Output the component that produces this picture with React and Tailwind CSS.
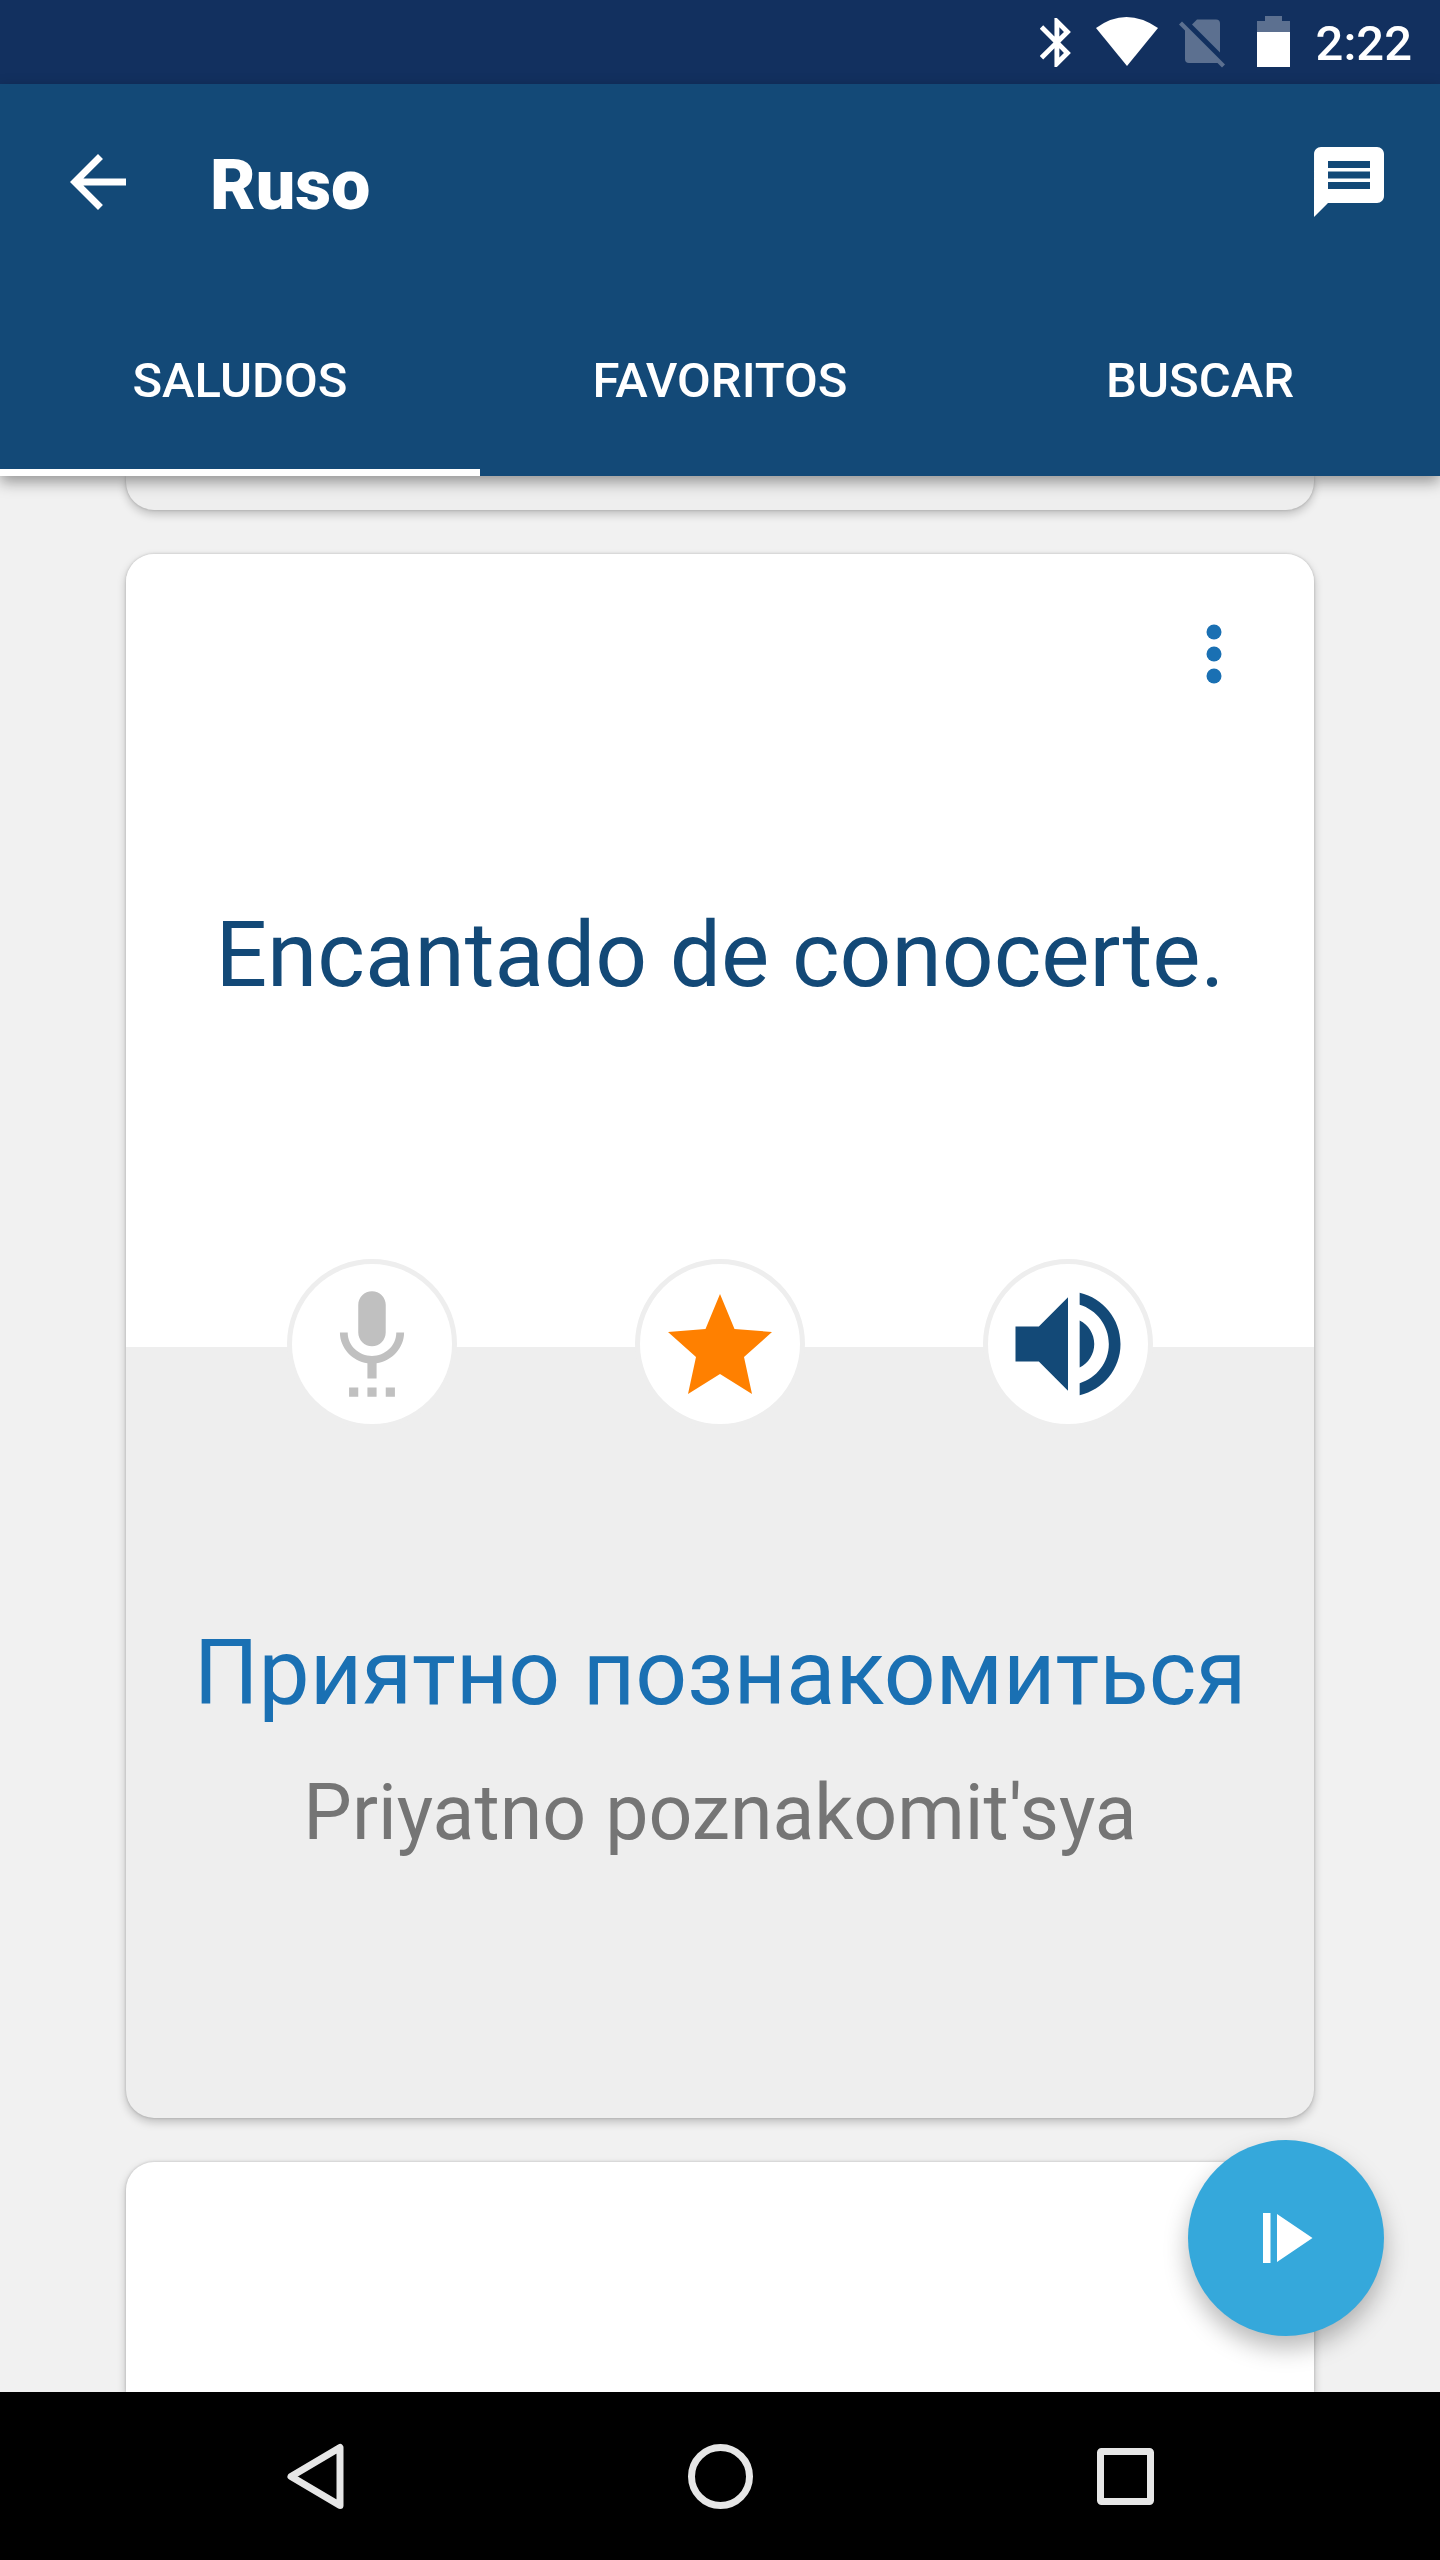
import React from "react";

const tabs = ["SALUDOS", "FAVORITOS", "BUSCAR"];

const cardShadow = "shadow-[0_4px_10px_rgba(0,0,0,0.22),0_0_3px_rgba(0,0,0,0.18)]";

const StatusBar = () => (
  <div className="flex h-[84px] shrink-0 items-center bg-[#12305f] pr-7 text-white">
    <svg className="ml-auto h-[84px] w-[270px]" viewBox="0 0 270 84" aria-hidden="true">
      {/* Bluetooth */}
      <path
        d="M17.710 7.710L12 2h-1v7.590L6.410 5 5 6.410 10.590 12 5 17.590 6.410 19 11 14.410V22h1l5.710-5.710-4.300-4.290 4.300-4.290zM13 5.830l1.880 1.880L13 9.590V5.830zm1.880 10.460L13 18.170v-3.760l1.880 1.880z"
        transform="translate(-12.5 13) scale(2.45)"
        fill="#fff"
      />
      {/* Wifi */}
      <path d="M56 28Q86 6 118 28L87 66Z" fill="#fff" />
      {/* No SIM */}
      <g fill="#5c7090">
        <path d="M152 24.5 157 19.5H176a4 4 0 0 1 4 4V52.500Z" />
        <path d="M145 28.500 179.500 63H149a4 4 0 0 1-4-4Z" />
        <path d="M139 24.500 142 21.500 185 64.500 182 67.500Z" />
      </g>
      {/* Battery */}
      <path d="M225 16h17v5h8v12h-33V21h8Z" fill="#5c7090" />
      <path d="M217 32h33v35h-33Z" fill="#fff" />
    </svg>
    <span className="ml-1.5 pt-1 text-[49px] leading-[56px] font-medium">2:22</span>
  </div>
);

const AppBar = () => (
  <header className="relative z-10 shrink-0 bg-[#134977] text-white shadow-[0_6px_14px_rgba(0,0,0,0.38)]">
    <div className="flex h-[196px] items-center pr-[49px] pl-14">
      <button aria-label="Atrás" className="h-[84px] w-[84px]">
        <svg className="h-[84px] w-[84px]" viewBox="0 0 24 24" fill="currentColor">
          <path d="M20 11H7.830l5.590-5.590L12 4l-8 8 8 8 1.410-1.410L7.830 13H20v-2z" />
        </svg>
      </button>
      <h1 className="ml-[70px] pt-1.5 text-[70px] leading-[84px] font-black">Ruso</h1>
      <button aria-label="Comentarios" className="ml-auto h-[84px] w-[84px]">
        <svg className="h-[84px] w-[84px]" viewBox="0 0 24 24" fill="currentColor">
          <path d="M20 2H4c-1.100 0-1.990.9-1.990 2L2 22l4-4h14c1.100 0 2-.9 2-2V4c0-1.100-.9-2-2-2zM6 9h12v2H6V9zm12 5H6v-2h12v2zm0-6H6V6h12v2z" />
        </svg>
      </button>
    </div>
    <nav className="grid h-[196px] grid-cols-3">
      {tabs.map((tab, index) => (
        <button
          key={tab}
          className={`border-b-[7px] pt-3 text-[49px] leading-[56px] font-medium ${
            index === 0 ? "border-white" : "border-transparent"
          }`}
        >
          {tab}
        </button>
      ))}
    </nav>
  </header>
);

const RoundButton = ({ label, children }) => (
  <button
    aria-label={label}
    className="flex h-[170px] w-[170px] items-center justify-center rounded-full border-[5px] border-[#eeeeee] bg-white"
  >
    {children}
  </button>
);

const PhraseCard = () => (
  <article className={`shrink-0 overflow-hidden rounded-[28px] bg-[#eeeeee] ${cardShadow}`}>
    <div className="flex h-[793px] flex-col bg-white">
      <div className="flex justify-end px-[72px] pt-[58px]">
        <button aria-label="Más opciones" className="h-[84px] w-14">
          <svg className="h-[84px] w-14" viewBox="0 0 56 84" fill="#1a70b3">
            <circle cx="28" cy="20" r="7.500" />
            <circle cx="28" cy="42" r="7.500" />
            <circle cx="28" cy="64" r="7.500" />
          </svg>
        </button>
      </div>
      <p className="mt-[203px] text-center text-[91px] leading-[112px] text-[#134977]">
        Encantado de conocerte.
      </p>
    </div>

    <div className="relative -mt-[88px] flex justify-center gap-[178px]">
      <RoundButton label="Grabar">
        <svg className="h-[110px] w-[110px]" viewBox="0 0.5 24 24" fill="#c0c0c0">
          <path d="M12 13c1.660 0 2.990-1.340 2.990-3L15 4c0-1.660-1.340-3-3-3S9 2.340 9 4v6c0 1.660 1.340 3 3 3zm-1 11h2v-2h-2v2zm-4 0h2v-2H7v2zm8 0h2v-2h-2v2zm4-14h-1.700c0 3-2.540 5.100-5.300 5.100S6.700 13 6.700 10H5c0 3.410 2.720 6.230 6 6.720V20h2v-3.280c3.280-.49 6-3.310 6-6.720z" />
        </svg>
      </RoundButton>
      <RoundButton label="Favorito">
        <svg className="h-[110px] w-[110px]" viewBox="0 0 110 110" fill="#ff8000">
          <path d="M55 5 69.500 40 107 43 79 68 87 105 55 85 23 105 31 68 3 43 40.500 40Z" />
        </svg>
      </RoundButton>
      <RoundButton label="Escuchar">
        <svg className="h-[140px] w-[140px]" viewBox="0 0 24 24" fill="#134977">
          <path d="M3 9v6h4l5 5V4L7 9H3zm13.500 3c0-1.770-1.020-3.290-2.500-4.030v8.050c1.480-.73 2.500-2.250 2.500-4.020zM14 3.230v2.060c2.890.86 5 3.540 5 6.710s-2.110 5.850-5 6.710v2.060c4.010-.91 7-4.490 7-8.770s-2.990-7.860-7-8.770z" />
        </svg>
      </RoundButton>
    </div>

    <div className="flex h-[689px] flex-col items-center pt-[188px]">
      <p className="text-[91px] leading-[112px] text-[#1a70b3]">Приятно познакомиться</p>
      <p className="mt-7 text-[77px] leading-[112px] text-[#757575]">Priyatno poznakomit'sya</p>
    </div>
  </article>
);

const NavBar = () => (
  <footer className="flex h-[168px] shrink-0 items-center justify-center gap-[296px] bg-black">
    <button aria-label="Atrás" className="h-[108px] w-[108px]">
      <svg viewBox="0 0 108 108" fill="none" stroke="#e6e6e6" strokeWidth="7" strokeLinejoin="round">
        <path d="M78 25.500V83.500L29 54.500Z" />
      </svg>
    </button>
    <button aria-label="Inicio" className="h-[108px] w-[108px]">
      <svg viewBox="0 0 108 108" fill="none" stroke="#e6e6e6" strokeWidth="7">
        <circle cx="54.500" cy="54.500" r="29" />
      </svg>
    </button>
    <button aria-label="Recientes" className="h-[108px] w-[108px]">
      <svg viewBox="0 0 108 108" fill="none" stroke="#e6e6e6" strokeWidth="7" strokeLinejoin="round">
        <rect x="30.500" y="29.500" width="50" height="50" rx="1" />
      </svg>
    </button>
  </footer>
);

const App = () => (
  <div className="flex h-screen flex-col bg-[#f1f1f1] font-['Roboto',sans-serif]">
    <StatusBar />
    <AppBar />
    <div className="relative min-h-0 flex-1">
      <main className="flex h-full flex-col gap-11 overflow-hidden px-[126px]">
        <div className={`h-[34px] shrink-0 rounded-b-[28px] bg-[#eeeeee] ${cardShadow}`} />
        <PhraseCard />
        <div className={`flex-1 rounded-t-[28px] bg-white ${cardShadow}`} />
      </main>
      <button
        aria-label="Reproducir"
        className="absolute right-14 bottom-14 flex h-[196px] w-[196px] items-center justify-center rounded-full bg-[#35a8db] shadow-[0_12px_24px_rgba(0,0,0,0.28)]"
      >
        <svg className="h-[84px] w-[84px]" viewBox="0 0 84 84" fill="#fff">
          <path d="M19 17h7.500v50H19zM33 18 68.500 42 33 66Z" />
        </svg>
      </button>
    </div>
    <NavBar />
  </div>
);

export default App;
